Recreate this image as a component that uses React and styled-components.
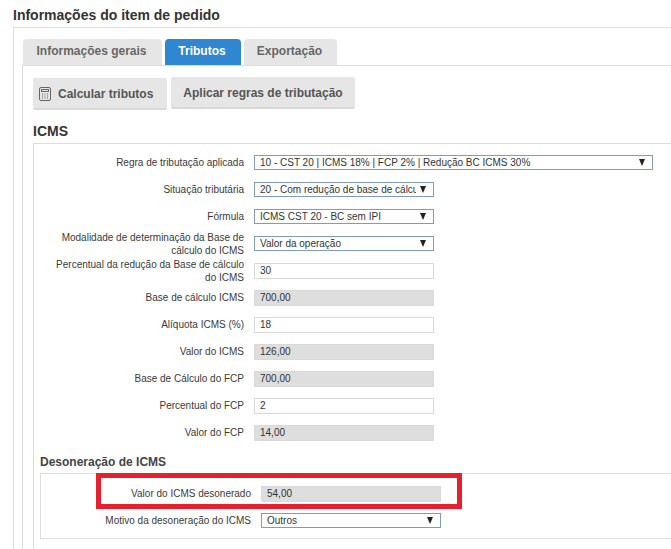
import React from 'react';
import styled, { createGlobalStyle } from 'styled-components';

const Global = createGlobalStyle`
  html, body {
    margin: 0;
    padding: 0;
    background: #fff;
    overflow: hidden;
  }
  body {
    font-family: "Liberation Sans", Arial, sans-serif;
    color: #333;
  }
`;

const Page = styled.div`
  width: 671px;
  height: 549px;
  overflow: hidden;
  padding: 7px 0 0 13px;
  box-sizing: border-box;
`;

const Title = styled.h2`
  margin: 0 0 4px;
  font-size: 14px;
  line-height: 16px;
  font-weight: bold;
  color: #333;
`;

const OuterPanel = styled.div`
  width: 700px;
  height: 560px;
  box-sizing: border-box;
  border: 1px solid #ddd;
  padding: 11px 0 0 8px;
`;

const TabBar = styled.div`
  display: flex;
  gap: 3px;
  height: 26px;
  margin-left: 1px;
`;

const Tab = styled.div`
  width: ${props => props.$width}px;
  padding-right: 2px;
  box-sizing: border-box;
  background: ${props => (props.$active ? '#2f86d1' : '#e6e6e6')};
  color: ${props => (props.$active ? '#fff' : '#666')};
  border-radius: 4px 4px 0 0;
  font-size: 12px;
  font-weight: bold;
  line-height: 25px;
  text-align: center;
  white-space: nowrap;
`;

const InnerPanel = styled.div`
  border: 1px solid #ddd;
  border-right: 0;
  padding: 11px 0 0 10px;
  height: 480px;
`;

const Toolbar = styled.div`
  display: flex;
  align-items: flex-start;
  gap: 4px;
`;

const Button = styled.div`
  display: flex;
  align-items: center;
  gap: 5px;
  height: 32px;
  margin-top: ${props => props.$offset || 0}px;
  padding: 2px 0 0 ${props => (props.$center ? '0' : '4px')};
  width: ${props => props.$width}px;
  box-sizing: border-box;
  background: #e6e6e6;
  border-bottom: 2px solid #d8d8d8;
  border-radius: 2px;
  color: #555;
  font-size: 12px;
  font-weight: bold;
  white-space: nowrap;
  justify-content: ${props => (props.$center ? 'center' : 'flex-start')};
`;

const SectionTitle = styled.h3`
  margin: 13px 0 4px;
  font-size: 14px;
  line-height: 16px;
  font-weight: bold;
  color: #333;
`;

const Fieldset = styled.div`
  border: 1px solid #ddd;
  border-right: 0;
  height: 420px;
  padding: 11px 0 0;
  box-sizing: border-box;
`;

const Row = styled.div`
  display: flex;
  align-items: center;
  height: 15px;
  margin-bottom: 12px;
`;

const Label = styled.label`
  width: 210px;
  flex: none;
  box-sizing: border-box;
  padding-left: 15px;
  text-align: right;
  font-size: 10px;
  line-height: 13px;
  color: #3a3a3a;
`;

const Field = styled.div`
  margin-left: 10px;
  width: ${props => props.$width || 180}px;
  height: ${props => (props.$select ? 15 : 16)}px;
  box-sizing: border-box;
  display: flex;
  align-items: center;
  justify-content: space-between;
  padding: 0 5px;
  font-size: 10px;
  color: #333;
  background: ${props => (props.$readOnly ? '#dedede' : '#fff')};
  border: 1px solid ${props => (props.$select ? '#7f9db9' : '#d9d9d9')};
  white-space: nowrap;
  overflow: hidden;
`;

const FieldText = styled.span`
  overflow: hidden;
  flex: 1;
`;

const Arrow = styled.span`
  flex: none;
  margin-left: 4px;
  margin-right: 2px;
  width: 0;
  height: 0;
  border-left: 3px solid transparent;
  border-right: 3px solid transparent;
  border-top: 7px solid #222;
`;

const SubTitle = styled.h4`
  margin: 15px 0 4px 6px;
  font-size: 12px;
  line-height: 14px;
  font-weight: bold;
  color: #444;
`;

const SubPanel = styled.div`
  position: relative;
  margin-left: 6px;
  border: 1px solid #ddd;
  border-right: 0;
  height: 66px;
  padding-top: 12px;
  box-sizing: border-box;
`;

const Highlight = styled.div`
  position: absolute;
  left: 55px;
  top: -1px;
  width: 366px;
  height: 36px;
  box-sizing: border-box;
  border: 5px solid #e7202d;
`;

const CalcIcon = () => (
  <svg width="16" height="16" viewBox="0 0 16 16" fill="none" stroke="#666" strokeWidth="1">
    <rect x="2.5" y="1.5" width="11" height="13" rx="1.5" />
    <rect x="4.5" y="3.5" width="7" height="2" />
    <path d="M5 8h1M7.5 8h1M10 8h1M5 10h1M7.5 10h1M10 10h1M5 12h1M7.5 12h1M10 12h1" />
  </svg>
);

const FormRow = ({ label, value, select, readOnly, width }) => (
  <Row>
    <Label>{label}</Label>
    <Field $select={select} $readOnly={readOnly} $width={width}>
      <FieldText>{value}</FieldText>
      {select && <Arrow />}
    </Field>
  </Row>
);

const App = () => (
  <Page>
    <Global />
    <Title>Informações do item de pedido</Title>
    <OuterPanel>
      <TabBar>
        <Tab $width={139}>Informações gerais</Tab>
        <Tab $width={76} $active>Tributos</Tab>
        <Tab $width={93}>Exportação</Tab>
      </TabBar>
      <InnerPanel>
        <Toolbar>
          <Button $width={134} $offset={1}><CalcIcon />Calcular tributos</Button>
          <Button $width={184} $center>Aplicar regras de tributação</Button>
        </Toolbar>
        <SectionTitle>ICMS</SectionTitle>
        <Fieldset>
          <FormRow label="Regra de tributação aplicada" value="10 - CST 20 | ICMS 18% | FCP 2% | Redução BC ICMS 30%" select width={399} />
          <FormRow label="Situação tributária" value="20 - Com redução de base de cálculo" select />
          <FormRow label="Fórmula" value="ICMS CST 20 - BC sem IPI" select />
          <FormRow label="Modalidade de determinação da Base de cálculo do ICMS" value="Valor da operação" select />
          <FormRow label="Percentual da redução da Base de cálculo do ICMS" value="30" />
          <FormRow label="Base de cálculo ICMS" value="700,00" readOnly />
          <FormRow label="Alíquota ICMS (%)" value="18" />
          <FormRow label="Valor do ICMS" value="126,00" readOnly />
          <FormRow label="Base de Cálculo do FCP" value="700,00" readOnly />
          <FormRow label="Percentual do FCP" value="2" />
          <FormRow label="Valor do FCP" value="14,00" readOnly />
          <SubTitle>Desoneração de ICMS</SubTitle>
          <SubPanel>
            <Highlight />
            <FormRow label="Valor do ICMS desonerado" value="54,00" readOnly />
            <FormRow label="Motivo da desoneração do ICMS" value="Outros" select />
          </SubPanel>
        </Fieldset>
      </InnerPanel>
    </OuterPanel>
  </Page>
);

export default App;
